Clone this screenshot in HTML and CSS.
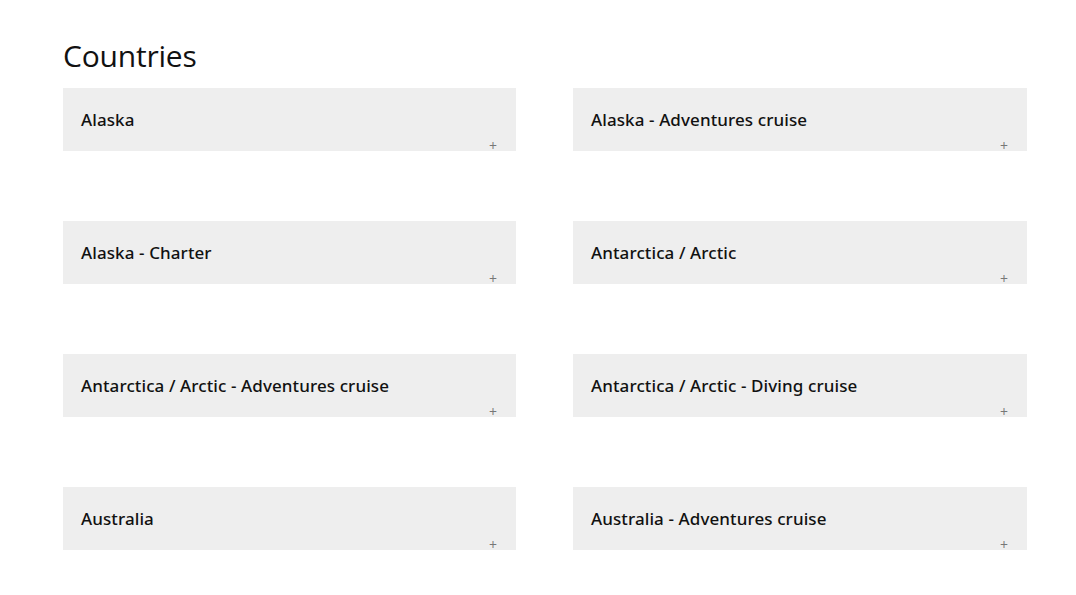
FILE: index.html
```html
<!DOCTYPE html>
<html>
<head>
<meta charset="utf-8">
<link rel="stylesheet" href="styles.css">
</head>
<body>
<main class="page">
  <h1 class="title">Countries</h1>
  <div class="grid">
    <div class="card"><span class="name">Alaska</span><span class="plus">+</span></div>
    <div class="card"><span class="name">Alaska - Adventures cruise</span><span class="plus">+</span></div>
    <div class="card"><span class="name">Alaska - Charter</span><span class="plus">+</span></div>
    <div class="card"><span class="name">Antarctica / Arctic</span><span class="plus">+</span></div>
    <div class="card"><span class="name">Antarctica / Arctic - Adventures cruise</span><span class="plus">+</span></div>
    <div class="card"><span class="name">Antarctica / Arctic - Diving cruise</span><span class="plus">+</span></div>
    <div class="card"><span class="name">Australia</span><span class="plus">+</span></div>
    <div class="card"><span class="name">Australia - Adventures cruise</span><span class="plus">+</span></div>
  </div>
</main>
</body>
</html>
```
FILE: styles.css
```css
html, body {
  margin: 0;
  padding: 0;
  background: #fff;
}
body {
  font-family: "Open Sans", "Noto Sans", sans-serif;
  color: #111;
}
.page {
  padding: 37px 0 0 63px;
}
.title {
  margin: 0 0 13px 0;
  font-size: 30px;
  font-weight: 400;
  line-height: 38px;
  letter-spacing: -0.2px;
}
.grid {
  display: grid;
  grid-template-columns: 453px 454px;
  column-gap: 57px;
  row-gap: 70px;
}
.card {
  position: relative;
  height: 63px;
  box-sizing: border-box;
  background: #eeeeee;
  display: flex;
  align-items: center;
  padding: 0 18px 1px 18px;
}
.name {
  font-family: "Noto Sans", "Open Sans", sans-serif;
  font-size: 17px;
  letter-spacing: 0.1px;
  font-weight: 500;
  color: #111;
}
.plus {
  position: absolute;
  right: 19px;
  bottom: -2px;
  font-size: 14px;
  line-height: 14px;
  color: #777;
}
```
